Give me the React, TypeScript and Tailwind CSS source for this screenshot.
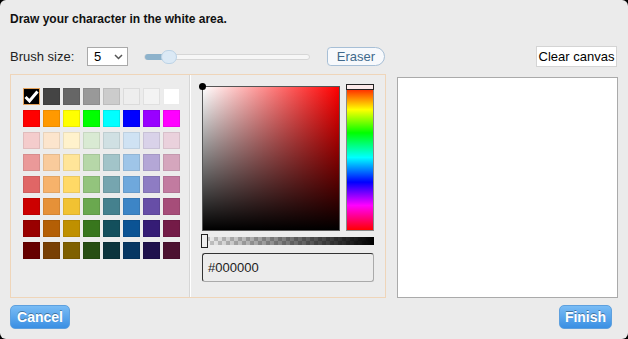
import React from "react";

const rows: string[][] = [
  ["#000000", "#444444", "#666666", "#999999", "#cccccc", "#eeeeee", "#f3f3f3", "#ffffff"],
  ["#ff0000", "#ff9900", "#ffff00", "#00ff00", "#00ffff", "#0000ff", "#9900ff", "#ff00ff"],
  ["#f4cccc", "#fce5cd", "#fff2cc", "#d9ead3", "#d0e0e3", "#cfe2f3", "#d9d2e9", "#ead1dc"],
  ["#ea9999", "#f9cb9c", "#ffe599", "#b6d7a8", "#a2c4c9", "#9fc5e8", "#b4a7d6", "#d5a6bd"],
  ["#e06666", "#f6b26b", "#ffd966", "#93c47d", "#76a5af", "#6fa8dc", "#8e7cc3", "#c27ba0"],
  ["#cc0000", "#e69138", "#f1c232", "#6aa84f", "#45818e", "#3d85c6", "#674ea7", "#a64d79"],
  ["#990000", "#b45f06", "#bf9000", "#38761d", "#134f5c", "#0b5394", "#351c75", "#741b47"],
  ["#660000", "#783f04", "#7f6000", "#274e13", "#0c343d", "#073763", "#20124d", "#4c1130"],
];

export default function App() {
  return (
    <div className="w-[628px] h-[339px] bg-black font-['Liberation_Sans',Arial,sans-serif]">
      <div className="h-full rounded-[6px] bg-[#ebebeb] px-[10px] pt-[12px] flex flex-col">
        <div className="text-[12px] leading-[14px] font-bold text-[#111]">Draw your character in the white area.</div>

        <div className="mt-[20px] flex items-center h-[21px]">
          <div className="w-[77px] text-[13px] text-[#222]">Brush size:</div>
          <div className="w-[41px] h-[19px] bg-white border border-[#a9a9a9] flex items-center justify-between pl-[6px] pr-[4px]">
            <span className="text-[13px] leading-none text-black">5</span>
            <svg width="9" height="6" viewBox="0 0 9 6">
              <polyline points="1,1 4.5,4.5 8,1" fill="none" stroke="#555" strokeWidth="1.5" />
            </svg>
          </div>
          <div className="relative ml-[16px] w-[166px] h-[6px] rounded-full bg-[#f6f6f6] border border-[#d6d6d6]">
            <div className="absolute left-0 top-[-1px] w-[20px] h-[6px] rounded-full bg-[#8db2cb]" />
            <div className="absolute left-[16px] top-[-5px] w-[16px] h-[14px] rounded-full bg-[#dbe9f5] border border-[#bcd3e6]" />
          </div>
          <div className="ml-[17px] w-[58px] h-[19px] border border-[#a7bfd6] bg-[#f7f9fc] rounded-l-[4px] rounded-r-[10px] flex items-center justify-center text-[13px] text-[#40698c]">
            Eraser
          </div>
          <div className="flex-1" />
          <div className="mr-[1px] w-[81px] h-[21px] bg-white border border-[#d4d4d4] flex items-center justify-center text-[13px] text-black">
            Clear canvas
          </div>
        </div>

        <div className="mt-[7px] flex items-start">
          <div className="w-[376px] h-[224px] border border-[#efd5b9] bg-[#ececec] flex">
            <div className="w-[179px] h-full border-r border-[#d6d6d6] pl-[12px] pt-[13px]">
              <div className="grid grid-cols-[repeat(8,17px)] gap-x-[3px] gap-y-[5px]">
                {rows.flat().map((c, i) => (
                  <div
                    key={i}
                    className={
                      i === 0
                        ? "w-[17px] h-[17px] border border-[#e3a15a] flex items-center justify-center"
                        : "w-[17px] h-[17px] border border-[rgba(0,0,0,0.08)]"
                    }
                    style={{ backgroundColor: c }}
                  >
                    {i === 0 && (
                      <svg width="15" height="13" viewBox="0 0 15 13">
                        <polyline points="1.5,7 5.5,11 13.5,1.5" fill="none" stroke="#fff" strokeWidth="3" />
                      </svg>
                    )}
                  </div>
                ))}
              </div>
            </div>
            <div className="flex-1 h-full border-l border-white pl-[11px] pt-[9px]">
              <div className="flex items-start">
                <div className="relative mt-[2px] w-[138px] h-[145px] border border-[#555] bg-[linear-gradient(to_top,#000,rgba(0,0,0,0)),linear-gradient(to_right,#fff,#f00)]">
                  <div className="absolute left-[-4px] top-[-4px] w-[7px] h-[7px] rounded-full bg-black" />
                </div>
                <div className="relative ml-[6px] w-[28px] h-[147px] border border-[#888] bg-[linear-gradient(to_bottom,#f00_0%,#ff0_17%,#0f0_33%,#0ff_50%,#00f_67%,#f0f_83%,#f00_100%)]">
                  <div className="absolute left-[-1px] top-[-1px] w-[28px] h-[6px] border border-[#222] bg-[#fbe9e9]" />
                </div>
              </div>
              <div className="relative mt-[6px] w-[172px] h-[8px] bg-[linear-gradient(to_right,rgba(0,0,0,0),#000),repeating-conic-gradient(#c8c8c8_0_25%,#f4f4f4_0_50%)] [background-size:100%_100%,8px_8px]">
                <div className="absolute left-[-1px] top-[-3px] w-[7px] h-[14px] border border-[#222] bg-[#eee]" />
              </div>
              <div className="mt-[8px] w-[172px] h-[29px] rounded-[3px] border border-[#aaa] border-t-[#333] border-l-[#333] bg-[#ececec] flex items-center pl-[5px] text-[13px] text-[#222]">
                #000000
              </div>
            </div>
          </div>
          <div className="ml-[11px] mt-[3px] w-[221px] h-[221px] bg-white border border-[#aaaaaa]" />
        </div>

        <div className="mt-[7px] flex items-start justify-between pr-[6px]">
          <div className="w-[60px] h-[24px] rounded-[5px] border border-[#5ea0de] bg-[linear-gradient(to_bottom,#79bcf5,#3a8fe3)] flex items-center justify-center text-[14px] font-bold text-white [text-shadow:0_-1px_0_rgba(0,0,0,0.35)]">
            Cancel
          </div>
          <div className="w-[53px] h-[24px] rounded-[5px] border border-[#5ea0de] bg-[linear-gradient(to_bottom,#79bcf5,#3a8fe3)] flex items-center justify-center text-[14px] font-bold text-white [text-shadow:0_-1px_0_rgba(0,0,0,0.35)]">
            Finish
          </div>
        </div>
      </div>
    </div>
  );
}
